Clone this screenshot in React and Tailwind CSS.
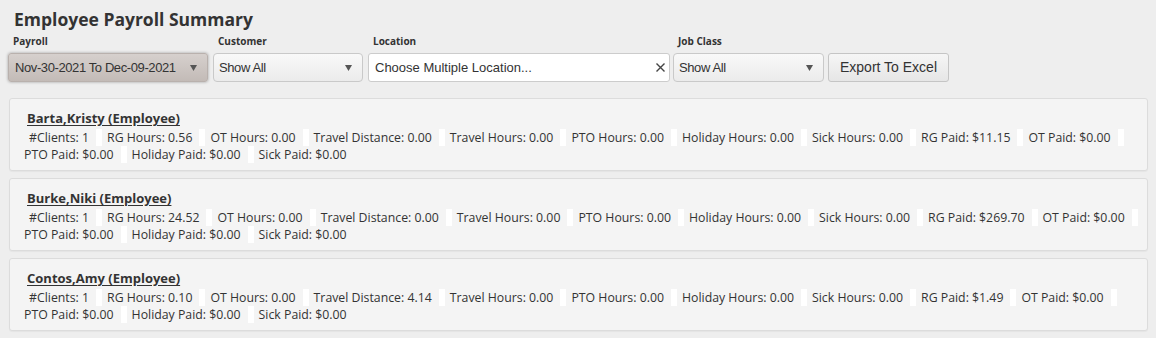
import React from 'react';

const employees = [
  {
    name: 'Barta,Kristy (Employee)',
    clients: '1',
    rg: '0.56',
    ot: '0.00',
    distance: '0.00',
    travel: '0.00',
    pto: '0.00',
    holiday: '0.00',
    sick: '0.00',
    rgPaid: '$11.15',
    otPaid: '$0.00',
    ptoPaid: '$0.00',
    holidayPaid: '$0.00',
    sickPaid: '$0.00',
  },
  {
    name: 'Burke,Niki (Employee)',
    clients: '1',
    rg: '24.52',
    ot: '0.00',
    distance: '0.00',
    travel: '0.00',
    pto: '0.00',
    holiday: '0.00',
    sick: '0.00',
    rgPaid: '$269.70',
    otPaid: '$0.00',
    ptoPaid: '$0.00',
    holidayPaid: '$0.00',
    sickPaid: '$0.00',
  },
  {
    name: 'Contos,Amy (Employee)',
    clients: '1',
    rg: '0.10',
    ot: '0.00',
    distance: '4.14',
    travel: '0.00',
    pto: '0.00',
    holiday: '0.00',
    sick: '0.00',
    rgPaid: '$1.49',
    otPaid: '$0.00',
    ptoPaid: '$0.00',
    holidayPaid: '$0.00',
    sickPaid: '$0.00',
  },
];

const Arrow = () => (
  <svg width="7" height="6" viewBox="0 0 7 6" className="flex-shrink-0">
    <path d="M0 0 L7 0 L3.5 6 Z" fill="#555" />
  </svg>
);

const Field = ({ label, width, children }) => (
  <div className={`flex flex-col ${width}`}>
    <span className="pl-[5px] text-[10px] font-bold leading-[14px] text-[#333] mb-[5px]">{label}</span>
    {children}
  </div>
);

const EmployeeCard = ({ emp }) => {
  const items = [
    `#Clients: ${emp.clients}`,
    `RG Hours: ${emp.rg}`,
    `OT Hours: ${emp.ot}`,
    `Travel Distance: ${emp.distance}`,
    `Travel Hours: ${emp.travel}`,
    `PTO Hours: ${emp.pto}`,
    `Holiday Hours: ${emp.holiday}`,
    `Sick Hours: ${emp.sick}`,
    `RG Paid: ${emp.rgPaid}`,
    `OT Paid: ${emp.otPaid}`,
    `PTO Paid: ${emp.ptoPaid}`,
    `Holiday Paid: ${emp.holidayPaid}`,
    `Sick Paid: ${emp.sickPaid}`,
  ];

  return (
    <div className="ml-[9px] w-[1139px] h-[73px] bg-[#f4f4f4] border border-[#dcdcdc] rounded-[3px] shadow-[0_1px_1px_rgba(0,0,0,0.04)] pt-[9px] pl-[14px] pr-[2px]">
      <div className="ml-[3px] text-[13px] font-bold leading-[21px] text-[#333] underline underline-offset-2">
        {emp.name}
      </div>
      <div className="flex flex-wrap gap-x-[5px] text-[12.3px] leading-[17px] text-[#333]">
        {items.map((item, i) => (
          <span
            key={i}
            className={`whitespace-nowrap ${i === 0 ? 'ml-[5px]' : ''} ${
              i < items.length - 1 ? 'pr-[7px] border-r-[6px] border-white' : ''
            }`}
          >
            {item}
          </span>
        ))}
      </div>
    </div>
  );
};

export default function App() {
  return (
    <div className="min-h-screen bg-[#eeeeee] font-['Open_Sans',sans-serif] pb-[6px]">
      <div className="px-[8px]">
        <h1 className="pl-[6px] pt-[7px] text-[17.5px] font-bold leading-[24px] text-[#333]">
          Employee Payroll Summary
        </h1>
        <div className="flex items-end mt-[3px]">
          <Field label="Payroll" width="w-[205px]">
            <div className="w-[200px] h-[29px] flex items-center justify-between pl-[6px] pr-[10px] rounded-[3px] border border-[#b9b1ad] bg-gradient-to-b from-[#d6d0cd] to-[#c3bbb7] shadow-[0_0_3px_rgba(0,0,0,0.35)] font-['Liberation_Sans',Arial,sans-serif] text-[13px] tracking-[-0.4px] text-[#333]">
              <span>Nov-30-2021 To Dec-09-2021</span>
              <Arrow />
            </div>
          </Field>
          <Field label="Customer" width="w-[155px]">
            <div className="w-[150px] h-[29px] flex items-center justify-between pl-[5px] pr-[10px] rounded-[4px] border border-[#c9c9c9] bg-gradient-to-b from-[#f9f9f9] to-[#ebebeb] font-['Liberation_Sans',Arial,sans-serif] text-[13px] tracking-[-0.4px] text-[#333]">
              <span>Show All</span>
              <Arrow />
            </div>
          </Field>
          <Field label="Location" width="w-[305px]">
            <div className="w-[302px] h-[29px] flex items-center justify-between pl-[6px] pr-[4px] rounded-[3px] border border-[#cccccc] bg-white font-['Liberation_Sans',Arial,sans-serif] text-[13px] text-[#333]">
              <span>Choose Multiple Location...</span>
              <svg width="9" height="9" viewBox="0 0 9 9">
                <path d="M0.5 0.5 L8.5 8.5 M8.5 0.5 L0.5 8.5" stroke="#444" strokeWidth="1.4" />
              </svg>
            </div>
          </Field>
          <Field label="Job Class" width="w-[155px]">
            <div className="w-[151px] h-[29px] flex items-center justify-between pl-[5px] pr-[10px] rounded-[4px] border border-[#c9c9c9] bg-gradient-to-b from-[#f9f9f9] to-[#ebebeb] font-['Liberation_Sans',Arial,sans-serif] text-[13px] tracking-[-0.4px] text-[#333]">
              <span>Show All</span>
              <Arrow />
            </div>
          </Field>
          <button className="w-[121px] h-[29px] rounded-[3px] border border-[#c5c5c5] bg-gradient-to-b from-[#f6f6f6] to-[#e6e6e6] font-['Liberation_Sans',Arial,sans-serif] text-[14px] text-[#333]">
            Export To Excel
          </button>
        </div>
      </div>
      <div className="mt-[16px] flex flex-col gap-[7px]">
        {employees.map((emp) => (
          <EmployeeCard key={emp.name} emp={emp} />
        ))}
      </div>
    </div>
  );
}
